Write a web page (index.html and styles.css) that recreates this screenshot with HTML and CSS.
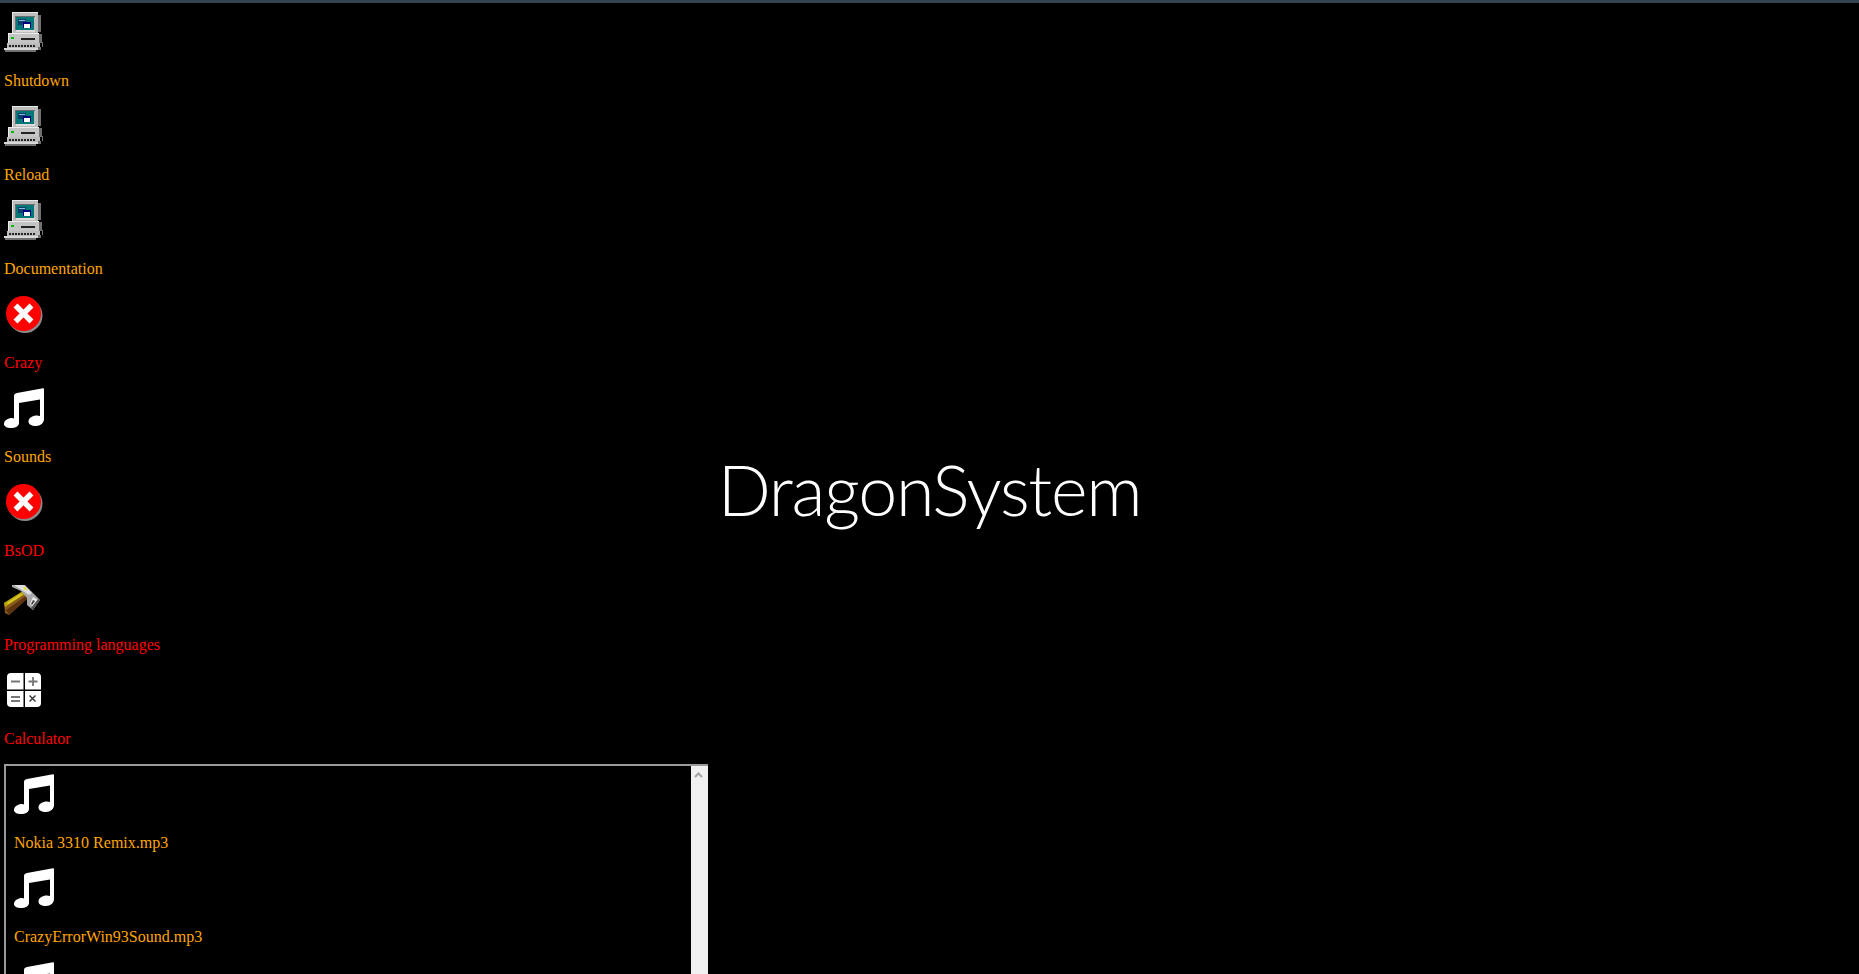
FILE: index.html
```html
<!DOCTYPE html>
<html lang="en">
<head>
    <meta charset="UTF-8">
    <meta name="viewport" content="width=device-width, initial-scale=1.0">
    <title>DragonSystem</title>
    <link rel="stylesheet" href="styles.css">
</head>
<body>
    <svg class="icon-defs" aria-hidden="true">
        <symbol id="icon-computer" viewBox="0 0 40 40" shape-rendering="crispEdges">
            <path fill="#707070" d="M34 3h3v17h-3z"/>
            <path fill="#bcbcbc" d="M8 0h26v22H8z"/>
            <path fill="#e8e8e8" d="M8 0h26v1H9v20H8z"/>
            <path fill="#6c6c6c" d="M11 4h20v1H12v13h-1z"/>
            <path fill="#dcdcdc" d="M12 18h19v2H12z"/>
            <path fill="#007878" d="M12 5h18v13H12z"/>
            <path fill="#0a3f6e" d="M14 7h8v6h-8z"/>
            <path fill="#8fb8dc" d="M15 8h6v1h-6z"/>
            <path fill="#000080" d="M19 10h8v6h-8z"/>
            <path fill="#fff" d="M20 12h6v4h-6z"/>
            <path fill="#707070" d="M33 22h5v9h-5z"/>
            <path fill="#c4c4c4" d="M4 21h31v10H4z"/>
            <path fill="#ececec" d="M4 21h31v1H5v9H4z"/>
            <path fill="#00c000" d="M7 25h3v2H7z"/>
            <path fill="#222" d="M17 26h14v2H17z"/>
            <path fill="#707070" d="M38 30h1v5h-1z"/>
            <path fill="#bcbcbc" d="M3 31h33v5H3z"/>
            <path fill="#222" d="M5 33h2v2H5zM8 33h2v2H8zM11 33h2v2h-2zM14 33h2v2h-2zM17 33h2v2h-2zM20 33h2v2h-2zM23 33h2v2h-2zM26 33h2v2h-2zM29 33h2v2h-2z"/>
            <path fill="#d8d8d8" d="M0 36h34v2H0z"/>
            <path fill="#707070" d="M1 38h31v2H1zM34 35h3v3h-3z"/>
        </symbol>
        <symbol id="icon-error" viewBox="0 0 40 40">
            <circle cx="21" cy="21.500" r="17.500" fill="#8a8a8a"/>
            <circle cx="19.500" cy="19.500" r="17.500" fill="#ff0000"/>
            <path d="M11.500 11.500l16 16M27.500 11.500l-16 16" stroke="#fff" stroke-width="5.500" fill="none"/>
        </symbol>
        <symbol id="icon-music" viewBox="0 0 40 40">
            <path fill="#fff" d="M10 8q0-2.500 3-3L39 .3q1-.1 1 1V31c0 4-3.500 7-8 7-4.500 0-7.500-1.700-7.500-4.500 0-3.500 4-6 8.500-6q1.500 0 3 .5V11.500L15 15V35c0 3-3.500 5-8 5C3 40 0 38.500 0 36c0-3.500 4-6 8-6 1 0 1.500 .2 2 .5z"/>
        </symbol>
        <symbol id="icon-hammer" viewBox="0 0 40 40">
            <path fill="#8a5a1c" d="M0 27l19-12 5 7L5 39l-4-2z"/>
            <path fill="#b8a800" d="M0 27l19-12 2 3L1 31z"/>
            <path fill="#e0d040" d="M3 27l14-9 1 1L4 28z"/>
            <path fill="#5c3410" d="M2 34L22 20l2 2L5 39z"/>
            <path fill="#a8a8a8" d="M8 9h13l15 15-7 10-6-5v-7l-6-7-9-4z"/>
            <path fill="#dedede" d="M10 9h10l8 8-3 2z"/>
            <path fill="#e6e000" d="M19 11h2l2 3h-2z"/>
            <path fill="#ececec" d="M29 21l5 3-5 7-3-3z"/>
            <path fill="#555" d="M36 24l-7 10-2-2 7-9z"/>
            <path fill="#444" d="M29 24l2 1-3 4-1-1z"/>
        </symbol>
        <symbol id="icon-calc" viewBox="0 0 40 40">
            <path fill="#fff" d="M7 3h12.500v16.500H3V7q0-4 4-4z"/>
            <path fill="#fff" d="M21 3h12q4 0 4 4v12.500H21z"/>
            <path fill="#fff" d="M3 21h16.500v16H7q-4 0-4-4z"/>
            <path fill="#fff" d="M21 21h16v12q0 4-4 4H21z"/>
            <path stroke="#777" stroke-width="1.800" fill="none" d="M7 11.500h9M24.500 11.500h9M29 7v9M7 27h9M7 31h9"/>
            <path stroke="#333" stroke-width="1.400" fill="none" d="M25.500 25.500l6 6M31.500 25.500l-6 6"/>
        </symbol>
    </svg>

    <div class="topbar"></div>

    <div class="page">
        <h1 class="brand">DragonSystem</h1>

        <div class="desktop">
            <div class="item">
                <svg class="icon"><use href="#icon-computer"/></svg>
                <a class="label">Shutdown</a>
            </div>
            <div class="item">
                <svg class="icon"><use href="#icon-computer"/></svg>
                <a class="label">Reload</a>
            </div>
            <div class="item">
                <svg class="icon"><use href="#icon-computer"/></svg>
                <a class="label">Documentation</a>
            </div>
            <div class="item">
                <svg class="icon"><use href="#icon-error"/></svg>
                <a class="label danger">Crazy</a>
            </div>
            <div class="item">
                <svg class="icon"><use href="#icon-music"/></svg>
                <a class="label">Sounds</a>
            </div>
            <div class="item">
                <svg class="icon"><use href="#icon-error"/></svg>
                <a class="label danger">BsOD</a>
            </div>
            <div class="item">
                <svg class="icon"><use href="#icon-hammer"/></svg>
                <a class="label danger">Programming languages</a>
            </div>
            <div class="item">
                <svg class="icon"><use href="#icon-calc"/></svg>
                <a class="label danger">Calculator</a>
            </div>

            <div class="sound-box">
                <div class="sound-list">
                    <div class="item">
                        <svg class="icon"><use href="#icon-music"/></svg>
                        <a class="label">Nokia 3310 Remix.mp3</a>
                    </div>
                    <div class="item">
                        <svg class="icon"><use href="#icon-music"/></svg>
                        <a class="label">CrazyErrorWin93Sound.mp3</a>
                    </div>
                    <div class="item">
                        <svg class="icon"><use href="#icon-music"/></svg>
                    </div>
                </div>
                <div class="scrollbar">
                    <svg class="scroll-up" viewBox="0 0 9 6"><path d="M1 5l3.500-3.500L8 5" fill="none" stroke="#a3a3a3" stroke-width="2"/></svg>
                </div>
            </div>
        </div>
    </div>
</body>
</html>
```

FILE: styles.css
```css
html, body {
    height: 100%;
}

body {
    margin: 0;
    background: #000;
    color: #ffa500;
    font-family: "Liberation Serif", "Times New Roman", serif;
    font-size: 16px;
    overflow: hidden;
    display: flex;
    flex-direction: column;
}

.icon-defs {
    width: 0;
    height: 0;
    position: absolute;
}

.topbar {
    height: 3px;
    flex: none;
    background: #35424f;
}

.page {
    flex: 1;
    min-height: 0;
    display: grid;
    grid-template-rows: minmax(0, 1fr);
}

.brand,
.desktop {
    grid-area: 1 / 1;
}

.brand {
    place-self: center;
    margin: 0;
    color: #fff;
    font-family: Lato, sans-serif;
    font-size: 70px;
    font-weight: 300;
    letter-spacing: -1.3px;
    line-height: 1;
}

.desktop {
    padding: 9px 0 0 4px;
    min-height: 0;
    display: flex;
    flex-direction: column;
}

.item {
    flex: none;
    display: flex;
    flex-direction: column;
    align-items: flex-start;
    gap: 20px;
    margin-bottom: 16px;
}

.icon {
    display: block;
    width: 40px;
    height: 40px;
}

.label {
    line-height: 18px;
}

.danger {
    color: #ff0000;
}

.sound-box {
    flex: 1;
    min-height: 0;
    display: flex;
    width: 702px;
    border-top: 2px solid #9a9a9a;
    border-left: 2px solid #9a9a9a;
}

.sound-list {
    flex: 1;
    padding: 8px;
    overflow: hidden;
}

.scrollbar {
    width: 17px;
    padding-right: 2px;
    box-sizing: border-box;
    background: #f0f0f0;
    display: flex;
    justify-content: center;
    align-items: flex-start;
}

.scroll-up {
    width: 9px;
    height: 6px;
    margin-top: 6px;
}
```
